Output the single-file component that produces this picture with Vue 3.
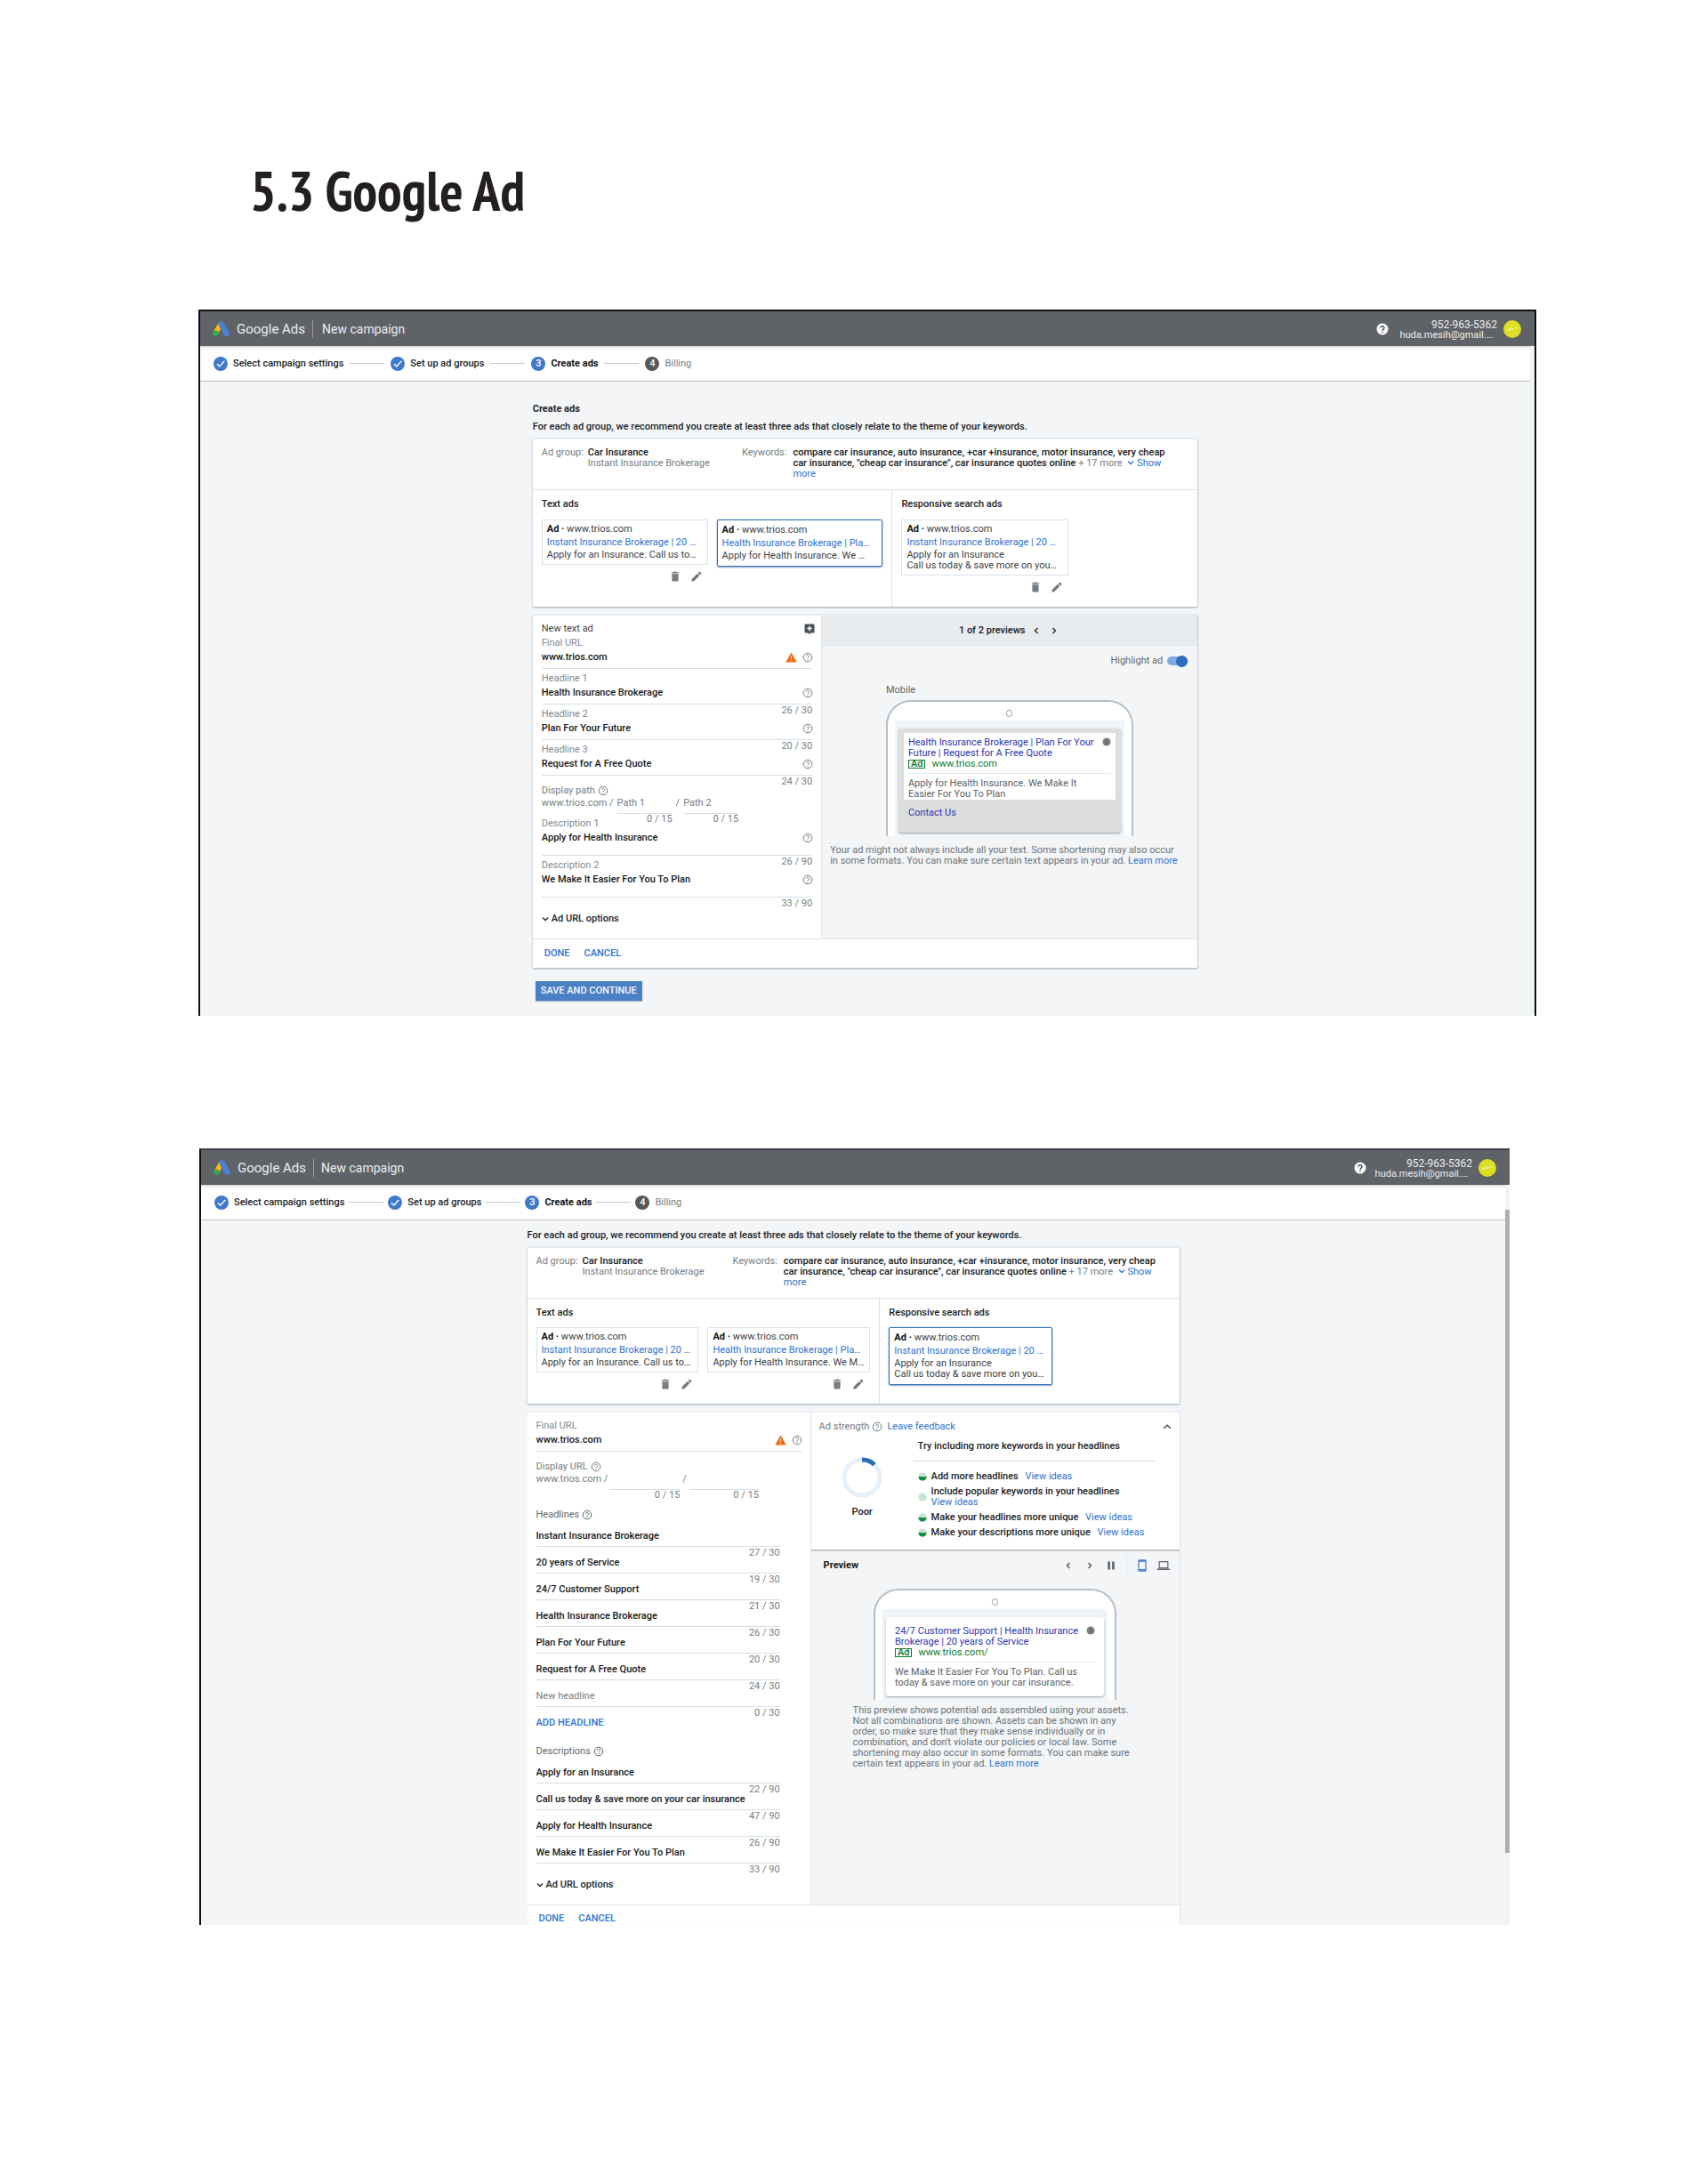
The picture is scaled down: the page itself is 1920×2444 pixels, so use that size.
<template>
  <main class="page">
    <!-- Shared icons -->
    <svg class="sprite" aria-hidden="true">
      <symbol id="i-logo" viewBox="0 0 18 18">
        <path d="M6.6 2.2 11 5.4 5.4 15 .8 12.3z" fill="#fbbc04" />
        <path d="M6.4 2.6a3 3 0 0 1 5.3-.3l5.6 10.3a3 3 0 0 1-5.2 3L6.6 5.9a3 3 0 0 1-.2-3.3z" fill="#4a80d4" />
        <circle cx="3.2" cy="14" r="3" fill="#34a853" />
      </symbol>
      <symbol id="i-help" viewBox="0 0 12 12">
        <circle cx="6" cy="6" r="4.8" fill="none" stroke="currentColor" stroke-width="1" />
        <path d="M4.4 4.9a1.6 1.5 0 1 1 2.5 1.2C6.2 6.5 6 6.7 6 7.3M6 8.1v1" fill="none" stroke="currentColor" stroke-width="1" />
      </symbol>
      <symbol id="i-help-solid" viewBox="0 0 14 14">
        <circle cx="7" cy="7" r="6.5" fill="#fff" />
        <path d="M5 5.6a2 1.9 0 1 1 3.1 1.5C7.2 7.7 7 8 7 8.8M7 9.8v1.4" fill="none" stroke="#3f4347" stroke-width="1.4" />
      </symbol>
      <symbol id="i-check" viewBox="0 0 16 16">
        <path d="M4 8.3l2.8 2.8L12.2 5" fill="none" stroke="#fff" stroke-width="1.4" />
      </symbol>
      <symbol id="i-trash" viewBox="0 0 12 12">
        <path d="M1.8 1.2h2.4l.6-.7h2.4l.6.7h2.4v1.3H1.8zM2.4 3.2h7.2v7.2q0 1.2-1.2 1.2H3.6q-1.2 0-1.2-1.2z" fill="#757d82" />
      </symbol>
      <symbol id="i-pencil" viewBox="0 0 12 12">
        <path d="M.6 9.1v2.3h2.3l6.4-6.3L7 2.8zM7.7 2.1 10 4.4l1.2-1.2q.4-.4 0-.9L9.8.8q-.5-.4-.9 0z" fill="#70777c" />
      </symbol>
      <symbol id="i-warn" viewBox="0 0 13 12">
        <path d="M6.5.5 12.8 11.5H.2z" fill="#ee6c1b" />
        <path d="M6.5 4.3v3.4M6.5 8.7v1.2" stroke="#fbd3b4" stroke-width="1" />
      </symbol>
      <symbol id="i-down" viewBox="0 0 8 8">
        <path d="M1 2.5 4 5.5 7 2.5" fill="none" stroke="currentColor" stroke-width="1.3" />
      </symbol>
      <symbol id="i-info" viewBox="0 0 10 10">
        <circle cx="5" cy="5" r="4.5" fill="#7c7f81" />
        <path d="M5 4.5v3M5 2.5v1.1" stroke="#4a4d4f" stroke-width="1.1" />
      </symbol>
      <symbol id="i-half" viewBox="0 0 10 10">
        <circle cx="5" cy="5" r="4.6" fill="#c4e6d0" />
        <path d="M.4 5a4.6 4.6 0 0 0 9.2 0z" fill="#129043" />
      </symbol>
      <symbol id="i-empty" viewBox="0 0 10 10">
        <circle cx="5" cy="5" r="4.6" fill="#c4e6d0" />
      </symbol>
    </svg>

    <h1>5.3 Google Ad</h1>

    <section v-for="screen in screens" :key="screen.id" class="screen" :class="screen.id">
      <header class="topbar">
        <svg class="logo"><use href="#i-logo" /></svg>
        <span class="brand">Google Ads</span>
        <span class="page-name">New campaign</span>
        <button class="icon-btn topbar-help" aria-label="Help">
          <svg class="i14"><use href="#i-help-solid" /></svg>
        </button>
        <div class="account">
          <span class="phone-number">952-963-5362</span>
          <span class="email">huda.mesih@gmail.…</span>
        </div>
        <span class="avatar">
          <svg viewBox="0 0 20 20"><path d="M4 12l2-3 1 3 2-4 1 3 2-2m1-1l1 1 2 0" fill="none" stroke="#f7f7b0" /></svg>
        </span>
      </header>

      <div class="viewport">
        <div class="content">
          <nav class="stepper">
            <template v-for="(step, i) in steps" :key="step.label">
              <span v-if="i > 0" class="step-line"></span>
              <span class="step" :class="step.state">
                <span class="dot">
                  <svg v-if="step.state === 'done'" class="i16"><use href="#i-check" /></svg>
                  <template v-else>{{ i + 1 }}</template>
                </span>
                {{ step.label }}
              </span>
            </template>
          </nav>

          <div class="workspace">
            <h2 v-if="screen.title">{{ screen.title }}</h2>
            <p class="intro">
              For each ad group, we recommend you create at least three ads that closely relate to the theme of your keywords.
            </p>

            <!-- Ad group summary -->
            <div class="card">
              <div class="group-info">
                <div class="pair">
                  <span class="muted">Ad group:</span>
                  <div>
                    <strong>Car Insurance</strong><br />
                    <span class="muted">Instant Insurance Brokerage</span>
                  </div>
                </div>
                <div class="pair keywords">
                  <span class="muted">Keywords:</span>
                  <div>
                    <strong>compare car insurance, auto insurance, +car +insurance, motor insurance, very cheap car insurance, "cheap car insurance", car insurance quotes online</strong>
                    <span class="muted"> + 17 more </span>
                    <a href="#" class="link show-more"><svg class="i8"><use href="#i-down" /></svg> Show more</a>
                  </div>
                </div>
              </div>
              <div class="ad-types">
                <div v-for="type in screen.types" :key="type.name" class="ad-type">
                  <h3>{{ type.name }}</h3>
                  <div class="ad-list">
                    <div v-for="ad in type.ads" :key="ad.title">
                      <div class="ad-tile" :class="{ selected: ad.selected }">
                        <div><b>Ad ·</b> www.trios.com</div>
                        <a href="#" class="link">{{ ad.title }}</a>
                        <p v-for="line in ad.lines" :key="line">{{ line }}</p>
                      </div>
                      <div v-if="!ad.selected" class="ad-actions">
                        <button class="icon-btn" aria-label="Remove ad"><svg class="i12"><use href="#i-trash" /></svg></button>
                        <button class="icon-btn" aria-label="Edit ad"><svg class="i12"><use href="#i-pencil" /></svg></button>
                      </div>
                    </div>
                  </div>
                </div>
              </div>
            </div>

            <!-- Text ad editor -->
            <div v-if="screen.id === 'text-ad'" class="card editor">
              <div class="editor-cols">
                <div class="form">
                  <div class="form-title">
                    New text ad
                    <button class="icon-btn" aria-label="Ideas">
                      <svg class="i12" viewBox="0 0 12 12">
                        <path d="M1.5.5h9q1 0 1 1v8q0 1-1 1h-3L6 12 4.5 10.5h-3q-1 0-1-1v-8q0-1 1-1z" fill="#4b5257" />
                        <path d="M6 2l1 2.5 2.5 1L7 6.5 6 9 5 6.5l-2.5-1L5 4.5z" fill="#fff" />
                      </svg>
                    </button>
                  </div>
                  <div v-for="f in textFields" :key="f.id" class="field">
                    <label :for="f.id">{{ f.label }}</label>
                    <div class="control">
                      <input :id="f.id" v-model="f.value" type="text" />
                      <svg v-if="f.warn" class="i13"><use href="#i-warn" /></svg>
                      <svg class="i12"><use href="#i-help" /></svg>
                    </div>
                    <span v-if="f.count" class="counter">{{ f.count }}</span>
                  </div>
                  <div class="display-path">
                    <div class="path-label">Display path <svg class="i12"><use href="#i-help" /></svg></div>
                    <div class="path-row">
                      www.trios.com /
                      <span class="path"><input type="text" placeholder="Path 1" aria-label="Path 1" /><span class="counter">0 / 15</span></span>
                      /
                      <span class="path"><input type="text" placeholder="Path 2" aria-label="Path 2" /><span class="counter">0 / 15</span></span>
                    </div>
                  </div>
                  <div v-for="f in textDescriptions" :key="f.id" class="field tall">
                    <label :for="f.id">{{ f.label }}</label>
                    <div class="control">
                      <input :id="f.id" v-model="f.value" type="text" />
                      <svg class="i12"><use href="#i-help" /></svg>
                    </div>
                    <span class="counter">{{ f.count }}</span>
                  </div>
                  <button class="url-options"><svg class="i8"><use href="#i-down" /></svg>Ad URL options</button>
                </div>

                <div class="preview">
                  <div class="preview-nav">
                    <strong>1 of 2 previews</strong>
                    <button class="icon-btn" aria-label="Previous"><svg class="i8 prev"><use href="#i-down" /></svg></button>
                    <button class="icon-btn" aria-label="Next"><svg class="i8 next"><use href="#i-down" /></svg></button>
                  </div>
                  <label class="highlight">
                    Highlight ad
                    <input v-model="highlight" type="checkbox" />
                  </label>
                  <div class="device">
                    <div class="device-name">Mobile</div>
                    <div class="phone">
                      <span class="camera"></span>
                      <div class="phone-screen">
                        <div class="serp highlighted">
                          <div class="serp-body">
                            <div class="serp-title">
                              <a href="#">Health Insurance Brokerage | Plan For Your Future | Request for A Free Quote</a>
                              <svg class="i10"><use href="#i-info" /></svg>
                            </div>
                            <div class="serp-url"><span class="ad-badge">Ad</span>www.trios.com</div>
                            <p>Apply for Health Insurance. We Make It Easier For You To Plan</p>
                          </div>
                          <a href="#" class="sitelink">Contact Us</a>
                        </div>
                      </div>
                    </div>
                  </div>
                  <p class="note">
                    Your ad might not always include all your text. Some shortening may also occur in some formats. You can make sure certain text appears in your ad. <a href="#" class="link">Learn more</a>
                  </p>
                </div>
              </div>
              <div class="card-footer">
                <button class="text-btn">DONE</button>
                <button class="text-btn">CANCEL</button>
              </div>
            </div>

            <!-- Responsive search ad editor -->
            <div v-else class="card editor responsive">
              <div class="editor-cols">
                <div class="form">
                  <div class="field">
                    <label for="rsa-url">Final URL</label>
                    <div class="control">
                      <input id="rsa-url" type="text" value="www.trios.com" />
                      <svg class="i13"><use href="#i-warn" /></svg>
                      <svg class="i12"><use href="#i-help" /></svg>
                    </div>
                  </div>
                  <div class="display-path">
                    <div class="path-label">Display URL <svg class="i12"><use href="#i-help" /></svg></div>
                    <div class="path-row">
                      www.trios.com /
                      <span class="path"><input type="text" aria-label="Path 1" /><span class="counter">0 / 15</span></span>
                      /
                      <span class="path"><input type="text" aria-label="Path 2" /><span class="counter">0 / 15</span></span>
                    </div>
                  </div>
                  <div class="asset-label">Headlines <svg class="i12"><use href="#i-help" /></svg></div>
                  <div v-for="(h, i) in headlines" :key="i" class="asset">
                    <input v-model="h.value" type="text" placeholder="New headline" :aria-label="'Headline ' + (i + 1)" />
                    <span class="counter">{{ h.count }}</span>
                  </div>
                  <button class="text-btn add">ADD HEADLINE</button>
                  <div class="asset-label">Descriptions <svg class="i12"><use href="#i-help" /></svg></div>
                  <div v-for="(d, i) in descriptions" :key="i" class="asset">
                    <input v-model="d.value" type="text" :aria-label="'Description ' + (i + 1)" />
                    <span class="counter">{{ d.count }}</span>
                  </div>
                  <button class="url-options"><svg class="i8"><use href="#i-down" /></svg>Ad URL options</button>
                </div>

                <div class="preview">
                  <div class="strength">
                    <div class="strength-head">
                      Ad strength <svg class="i12"><use href="#i-help" /></svg>
                      <a href="#" class="link">Leave feedback</a>
                      <button class="icon-btn collapse" aria-label="Collapse"><svg class="i10 up"><use href="#i-down" /></svg></button>
                    </div>
                    <div class="strength-body">
                      <div class="score">
                        <svg viewBox="0 0 46 46">
                          <circle cx="23" cy="23" r="20" fill="none" stroke="#e6f0fa" stroke-width="5" />
                          <path d="M23 3a20 20 0 0 1 14 5.5" fill="none" stroke="#2a6fbb" stroke-width="5" />
                        </svg>
                        <strong>Poor</strong>
                      </div>
                      <div class="tips">
                        <div class="tips-title">Try including more keywords in your headlines</div>
                        <ul>
                          <li v-for="tip in tips" :key="tip.text">
                            <svg class="i10"><use :href="tip.started ? '#i-half' : '#i-empty'" /></svg>
                            <span>{{ tip.text }} <a href="#" class="link" :class="{ spaced: tip.started }">View ideas</a></span>
                          </li>
                        </ul>
                      </div>
                    </div>
                  </div>
                  <div class="preview-bar">
                    <strong>Preview</strong>
                    <button class="icon-btn" aria-label="Previous"><svg class="i8 prev"><use href="#i-down" /></svg></button>
                    <button class="icon-btn" aria-label="Next"><svg class="i8 next"><use href="#i-down" /></svg></button>
                    <button class="icon-btn" aria-label="Pause">
                      <svg class="i10" viewBox="0 0 10 10"><path d="M1.3.5h2.6v9H1.3zM6.1.5h2.6v9H6.1z" fill="#5f6469" /></svg>
                    </button>
                    <span class="bar-sep"></span>
                    <button class="icon-btn" aria-label="Mobile preview">
                      <svg class="i14" viewBox="0 0 14 14"><rect x="3" y=".8" width="8" height="12.4" rx="1" fill="none" stroke="#3a78d0" stroke-width="1.2" /><path d="M3 2h8M3 11.8h8" stroke="#3a78d0" stroke-width="1.4" /></svg>
                    </button>
                    <button class="icon-btn" aria-label="Desktop preview">
                      <svg class="i14" viewBox="0 0 14 14"><path d="M2.2 2.6h9.6v7H2.2z" fill="none" stroke="#5f6469" stroke-width="1.2" /><path d="M0 11.2h14" stroke="#5f6469" stroke-width="1.6" /></svg>
                    </button>
                  </div>
                  <div class="device">
                    <div class="phone">
                      <span class="camera"></span>
                      <div class="phone-screen">
                        <div class="serp">
                          <div class="serp-body">
                            <div class="serp-title">
                              <a href="#">24/7 Customer Support | Health Insurance Brokerage | 20 years of Service</a>
                              <svg class="i10"><use href="#i-info" /></svg>
                            </div>
                            <div class="serp-url"><span class="ad-badge">Ad</span>www.trios.com/</div>
                            <p>We Make It Easier For You To Plan. Call us today &amp; save more on your car insurance.</p>
                          </div>
                        </div>
                      </div>
                    </div>
                  </div>
                  <p class="note">
                    This preview shows potential ads assembled using your assets. Not all combinations are shown. Assets can be shown in any order, so make sure that they make sense individually or in combination, and don't violate our policies or local law. Some shortening may also occur in some formats. You can make sure certain text appears in your ad. <a href="#" class="link">Learn more</a>
                  </p>
                </div>
              </div>
              <div class="card-footer">
                <button class="text-btn">DONE</button>
                <button class="text-btn">CANCEL</button>
              </div>
            </div>

            <button v-if="screen.id === 'text-ad'" class="save-btn">SAVE AND CONTINUE</button>
          </div>
        </div>
        <div class="scrollbar"><span v-if="screen.id === 'search-ad'" class="thumb"></span></div>
      </div>
    </section>
  </main>
</template>

<script setup>
import { ref } from 'vue'

const steps = [
  { label: 'Select campaign settings', state: 'done' },
  { label: 'Set up ad groups', state: 'done' },
  { label: 'Create ads', state: 'current' },
  { label: 'Billing', state: 'todo' }
]

const instantAd = { title: 'Instant Insurance Brokerage | 20 …', lines: ['Apply for an Insurance. Call us to…'] }
const searchAd = { title: 'Instant Insurance Brokerage | 20 …', lines: ['Apply for an Insurance', 'Call us today & save more on you…'] }

const screens = [
  {
    id: 'text-ad',
    title: 'Create ads',
    types: [
      {
        name: 'Text ads',
        ads: [
          instantAd,
          { title: 'Health Insurance Brokerage | Pla…', lines: ['Apply for Health Insurance. We …'], selected: true }
        ]
      },
      { name: 'Responsive search ads', ads: [searchAd] }
    ]
  },
  {
    id: 'search-ad',
    types: [
      {
        name: 'Text ads',
        ads: [
          instantAd,
          { title: 'Health Insurance Brokerage | Pla…', lines: ['Apply for Health Insurance. We M…'] }
        ]
      },
      { name: 'Responsive search ads', ads: [{ ...searchAd, selected: true }] }
    ]
  }
]

// Form state
const highlight = ref(true)

const textFields = ref([
  { id: 'final-url', label: 'Final URL', value: 'www.trios.com', warn: true },
  { id: 'headline-1', label: 'Headline 1', value: 'Health Insurance Brokerage', count: '26 / 30' },
  { id: 'headline-2', label: 'Headline 2', value: 'Plan For Your Future', count: '20 / 30' },
  { id: 'headline-3', label: 'Headline 3', value: 'Request for A Free Quote', count: '24 / 30' }
])

const textDescriptions = ref([
  { id: 'description-1', label: 'Description 1', value: 'Apply for Health Insurance', count: '26 / 90' },
  { id: 'description-2', label: 'Description 2', value: 'We Make It Easier For You To Plan', count: '33 / 90' }
])

const headlines = ref([
  { value: 'Instant Insurance Brokerage', count: '27 / 30' },
  { value: '20 years of Service', count: '19 / 30' },
  { value: '24/7 Customer Support', count: '21 / 30' },
  { value: 'Health Insurance Brokerage', count: '26 / 30' },
  { value: 'Plan For Your Future', count: '20 / 30' },
  { value: 'Request for A Free Quote', count: '24 / 30' },
  { value: '', count: '0 / 30' }
])

const descriptions = ref([
  { value: 'Apply for an Insurance', count: '22 / 90' },
  { value: 'Call us today & save more on your car insurance', count: '47 / 90' },
  { value: 'Apply for Health Insurance', count: '26 / 90' },
  { value: 'We Make It Easier For You To Plan', count: '33 / 90' }
])

const tips = [
  { text: 'Add more headlines', started: true },
  { text: 'Include popular keywords in your headlines', started: false },
  { text: 'Make your headlines more unique', started: true },
  { text: 'Make your descriptions more unique', started: true }
]
</script>

<style>
body {
  margin: 0;
  background: #fff;
}
</style>

<style scoped>
.page {
  padding: 174px 193px 281px 223px;
  font-family: Roboto, "Liberation Sans", sans-serif;
  font-size: 11px;
  line-height: 12px;
  color: #202427;
}

.page * {
  box-sizing: border-box;
}

.sprite {
  position: absolute;
  width: 0;
  height: 0;
}

h1 {
  margin: 0 0 94px 58px;
  font-family: "PT Sans Narrow", "Liberation Sans Narrow", "Open Sans", sans-serif;
  font-size: 62px;
  line-height: 80px;
  font-weight: 700;
  color: #231f20;
}

h2,
h3,
p,
ul {
  margin: 0;
  padding: 0;
  font-size: 11px;
}

strong {
  font-weight: 500;
  color: #16191b;
}

button,
input {
  font: inherit;
  color: inherit;
  margin: 0;
  padding: 0;
  border: none;
  background: none;
}

input {
  outline: none;
  min-width: 0;
}

svg {
  flex: none;
}

.i8 { width: 8px; height: 8px; }
.i10 { width: 10px; height: 10px; }
.i12 { width: 12px; height: 12px; }
.i13 { width: 13px; height: 12px; }
.i14 { width: 14px; height: 14px; }
.i16 { width: 16px; height: 16px; }
.prev { transform: rotate(90deg); }
.next { transform: rotate(-90deg); }
.up { transform: rotate(180deg); }

.icon-btn {
  display: inline-flex;
  align-items: center;
  justify-content: center;
}

.muted {
  color: #757d82;
}

.link {
  color: #2e72cf;
  text-decoration: none;
}

/* Window frame */
.screen {
  border: 2px solid #0d0f10;
  border-bottom: none;
}

.search-ad {
  margin: 149px 30px 0 1px;
  border-top-color: #3a4046;
  border-right: none;
}

.topbar {
  display: flex;
  align-items: center;
  height: 39px;
  padding: 0 15px 0 14px;
  background: #5f6368;
  color: #eceef0;
}

.logo {
  width: 19px;
  height: 19px;
  margin-right: 8px;
}

.brand {
  padding-right: 8px;
  border-right: 1px solid #9a9da1;
  font-size: 15px;
  line-height: 20px;
}

.page-name {
  margin-left: 10px;
  font-size: 14px;
}

.search-ad .page-name {
  margin-left: 8px;
}

.topbar-help {
  margin-left: auto;
}

.account {
  display: flex;
  flex-direction: column;
  align-items: flex-end;
  margin: 0 7px 0 10px;
  padding-top: 3px;
}

.text-ad .account {
  margin-left: 13px;
}

.phone-number {
  font-size: 12px;
}

.email {
  padding-right: 5px;
}

.avatar {
  width: 20px;
  height: 20px;
  border-radius: 50%;
  background: #dede25;
}

.viewport {
  display: flex;
  background: #f3f5f7;
}

.content {
  flex: 1;
}

.scrollbar {
  width: 5px;
  background: #f1f4f6;
}

.thumb {
  display: block;
  height: 723px;
  margin-top: 28px;
  background: #adb0b2;
}

/* Stepper */
.stepper {
  display: flex;
  align-items: center;
  height: 40px;
  padding-left: 15px;
  background: #fff;
  border-bottom: 1px solid #bcc2c6;
  box-shadow: inset 0 3px 3px -2px #c5c8ca;
}

.step {
  display: flex;
  align-items: center;
  gap: 6px;
  font-weight: 500;
}

.step.current {
  font-weight: 700;
  color: #111;
}

.step.todo {
  font-weight: 400;
  color: #757d82;
}

.dot {
  display: flex;
  align-items: center;
  justify-content: center;
  width: 16px;
  height: 16px;
  border-radius: 50%;
  background: #4179ca;
  color: #fff;
  font-weight: 500;
}

.todo .dot {
  background: #55595c;
}

.step-line {
  width: 39px;
  height: 1px;
  margin: 0 7px;
  background: #bfc7cb;
}

.search-ad .step-line {
  margin: 0 5px;
}

/* Workspace */
.workspace {
  width: 50%;
  margin: 0 auto;
}

.text-ad .workspace {
  padding: 23px 0 17px;
}

.search-ad .workspace {
  padding-top: 9px;
}

h2 {
  margin-bottom: 4px;
  line-height: 16px;
  font-weight: 700;
}

.intro {
  margin-bottom: 5px;
  line-height: 16px;
  font-weight: 500;
  white-space: nowrap;
}

.card {
  background: #fff;
  border-top: 1px solid #e3edf4;
  box-shadow: 0 1px 2px #93a4ad, 1px 0 1px #dfe8ee;
}

.group-info {
  display: grid;
  grid-template-columns: 30% 1fr;
  padding: 9px 20px 11px 10px;
  border-bottom: 1px solid #dce6ee;
}

.pair {
  display: flex;
  gap: 5px;
}

.keywords {
  gap: 7px;
  margin-left: 10px;
}

.show-more svg {
  margin-left: 3px;
}

.ad-types {
  display: grid;
  grid-template-columns: 54% 46%;
}

.ad-type {
  padding: 8px 10px 16px;
}

.ad-type + .ad-type {
  border-left: 1px solid #dce6ee;
}

h3 {
  margin-bottom: 9px;
  line-height: 16px;
  font-weight: 500;
}

.search-ad h3 {
  margin-bottom: 8px;
}

.ad-list {
  display: grid;
  grid-template-columns: 1fr 1fr;
  gap: 10px;
}

.ad-type + .ad-type .ad-list {
  grid-template-columns: 58% 1fr;
}

.ad-tile {
  padding: 4px 5px;
  border: 1px solid #d5e3ef;
  color: #3c4246;
  white-space: nowrap;
}

.ad-tile.selected {
  padding: 5px;
  border-color: #2f70c2;
  border-radius: 2px;
  box-shadow: 0 0 1px #3d7ac6, 0 1px 2px #9aa5ad;
}

.ad-tile b {
  color: #111;
}

.ad-tile .link {
  display: block;
  margin: 3px 0 2px;
}

.ad-actions {
  display: flex;
  justify-content: flex-end;
  gap: 12px;
  padding: 7px 7px 0 0;
}

.editor {
  margin-top: 9px;
}

.editor-cols {
  display: grid;
  grid-template-columns: 43.4% 1fr;
}

.form {
  display: flex;
  flex-direction: column;
  padding: 7px 10px 14px;
  color: #757d82;
}

.form-title {
  display: flex;
  justify-content: space-between;
  margin-right: -3px;
  line-height: 16px;
  color: #3c4246;
}

.field {
  position: relative;
  margin-bottom: 3px;
  padding-bottom: 4px;
  border-bottom: 1px solid #d3e1e7;
  line-height: 16px;
}

.field.tall {
  padding-bottom: 11px;
}

.field label {
  display: block;
  width: fit-content;
  color: #81898e;
}

.control {
  display: flex;
  align-items: center;
  gap: 6px;
  height: 16px;
  margin-right: -1px;
}

.control input {
  flex: 1;
  height: 16px;
  font-weight: 500;
  color: #16191b;
}

.counter {
  position: absolute;
  top: 100%;
  right: 0;
  line-height: 15px;
  font-weight: 400;
  color: #757d82;
  white-space: nowrap;
}

.display-path {
  margin: 7px 0 3px;
  line-height: 14px;
}

.path-label,
.asset-label {
  display: flex;
  align-items: center;
  gap: 3px;
}

.path-row {
  display: flex;
  gap: 4px;
}

.path {
  position: relative;
  width: 62px;
  height: 19px;
  border-bottom: 1px solid #d3e1e7;
}

.path input {
  display: block;
  width: 100%;
  height: 14px;
}

.path .counter {
  line-height: 14px;
}

input::placeholder {
  color: #757d82;
  opacity: 1;
}

.url-options {
  display: flex;
  align-items: center;
  gap: 3px;
  margin-top: 13px;
  line-height: 16px;
  font-weight: 500;
  color: #202427;
}

.card-footer {
  display: flex;
  gap: 16px;
  padding: 8px 13px;
  border-top: 1px solid #dce6ee;
}

.text-btn {
  line-height: 16px;
  font-weight: 500;
  color: #2e72cf;
}

.save-btn {
  display: block;
  height: 22px;
  margin: 15px 0 0 3px;
  padding: 0 6px;
  background: #4c80c5;
  color: #f4f8fd;
  font-weight: 500;
  box-shadow: 0 1px 1px #a9b6c4;
}

/* Preview column */
.preview {
  background: #f3f5f7;
  border-left: 1px solid #dce6ee;
}

.preview-nav {
  display: flex;
  align-items: center;
  justify-content: center;
  gap: 12px;
  height: 34px;
  padding-right: 4px;
  background: #e9ecef;
  border-bottom: 1px solid #dce6ee;
}

.preview-nav strong {
  margin-right: -4px;
}

.highlight {
  display: flex;
  justify-content: flex-end;
  align-items: center;
  gap: 5px;
  padding: 9px 11px 0 0;
  line-height: 16px;
  color: #5f676c;
}

.highlight input {
  display: flex;
  appearance: none;
  align-items: center;
  width: 23px;
  height: 10px;
  border-radius: 5px;
  background: #7da9e0;
}

.highlight input::after {
  content: "";
  width: 13px;
  height: 13px;
  border-radius: 50%;
  background: #2c6cc0;
}

.highlight input:checked {
  justify-content: flex-end;
}

.device {
  width: 66%;
  margin: 17px auto 0;
}

.device-name {
  margin-bottom: 3px;
  line-height: 16px;
  color: #5f676c;
}

.phone {
  position: relative;
  padding: 21px 8px 0;
  border: 2px solid #b3bfc8;
  border-bottom: none;
  border-radius: 28px 28px 0 0;
  background: #fff;
}

.camera {
  position: absolute;
  top: 9px;
  left: 50%;
  width: 7px;
  height: 8px;
  margin-left: -4px;
  border: 1px solid #8f9ba2;
  border-radius: 4px;
}

.phone-screen {
  padding: 9px 4px 4px;
  background: #f1f4f6;
}

.serp {
  padding: 4px 0 9px;
  border-radius: 3px;
  background: #fff;
  box-shadow: 0 1px 2px #9aa3a9;
}

.serp-body {
  padding: 6px 10px 0;
}

.highlighted {
  padding: 5px 6px;
  background: #dcdddd;
}

.highlighted .serp-body {
  padding: 5px 5px 0;
  background: #fff;
}

.serp-title {
  display: flex;
  justify-content: space-between;
}

.serp-title a,
.sitelink {
  color: #2b36ad;
  text-decoration: none;
}

.serp-url {
  display: flex;
  align-items: center;
  padding-bottom: 4px;
  border-bottom: 1px solid #e4e8ea;
  color: #0b7a2c;
}

.ad-badge {
  height: 10px;
  margin-right: 7px;
  padding: 0 2px;
  border: 1px solid #0b7a2c;
  line-height: 8px;
  font-weight: 500;
}

.serp p {
  padding: 5px 14px 0 0;
  color: #5c6266;
}

.sitelink {
  display: block;
  padding: 7px 5px 9px;
  line-height: 16px;
}

.note {
  padding: 10px 18px 0 9px;
  color: #6a7277;
}

/* Responsive editor */
.responsive {
  box-shadow: 1px 0 1px #dfe8ee;
}

.responsive .path {
  width: 78px;
}

.responsive .path-row {
  gap: 3px;
}

.responsive .display-path {
  margin-bottom: 20px;
}

.asset-label {
  margin-bottom: 7px;
  line-height: 16px;
  color: #5f676c;
}

.asset {
  position: relative;
  margin: 0 24px 9px 0;
  border-bottom: 1px solid #d3e1e7;
}

.asset input {
  display: block;
  width: 87%;
  height: 20px;
  padding-bottom: 4px;
  font-weight: 500;
  color: #16191b;
}

.asset input::placeholder {
  font-weight: 400;
}

.text-btn.add {
  align-self: flex-start;
  margin: 1px 0 16px;
}

.responsive .url-options {
  margin-top: 7px;
}

.responsive .card-footer {
  padding-bottom: 0;
}

.responsive .text-btn {
  line-height: 14px;
}

.responsive .text-btn.add {
  line-height: 16px;
}

.strength {
  padding: 8px 9px;
  background: #fff;
  border-bottom: 1px solid #aab2b7;
  box-shadow: 0 1px 1px #d4d9dc;
}

.strength-head {
  display: flex;
  align-items: center;
  gap: 3px;
  line-height: 16px;
  color: #757d82;
}

.strength-head .link {
  margin-left: 2px;
}

.collapse {
  margin-left: auto;
  color: #5f676c;
}

.strength-body {
  display: flex;
}

.score {
  display: flex;
  flex-direction: column;
  align-items: center;
  gap: 10px;
  width: 97px;
  padding-top: 26px;
}

.score svg {
  width: 46px;
  height: 46px;
}

.tips {
  flex: 1;
  margin: 0 17px 0 9px;
  font-weight: 500;
}

.tips-title {
  padding: 6px 5px 8px;
  border-bottom: 1px solid #d3e1e7;
  line-height: 16px;
}

.tips ul {
  padding: 11px 0 0 5px;
  list-style: none;
}

.tips li {
  display: flex;
  align-items: center;
  gap: 5px;
  margin-bottom: 5px;
}

.tips .link {
  font-weight: 400;
  white-space: nowrap;
}

.tips .spaced {
  margin-left: 5px;
}

.preview-bar {
  display: flex;
  align-items: center;
  gap: 10px;
  padding: 5px 11px 0 14px;
  color: #4a5054;
}

.preview-bar .icon-btn {
  width: 14px;
}

.preview-bar strong {
  margin-right: auto;
  font-weight: 700;
}

.bar-sep {
  width: 1px;
  height: 24px;
  background: #dce6ee;
}

.responsive .device {
  margin-top: 14px;
}

.responsive .serp p {
  padding-right: 0;
}

.responsive .note {
  padding: 6px 50px 0 47px;
}
</style>
